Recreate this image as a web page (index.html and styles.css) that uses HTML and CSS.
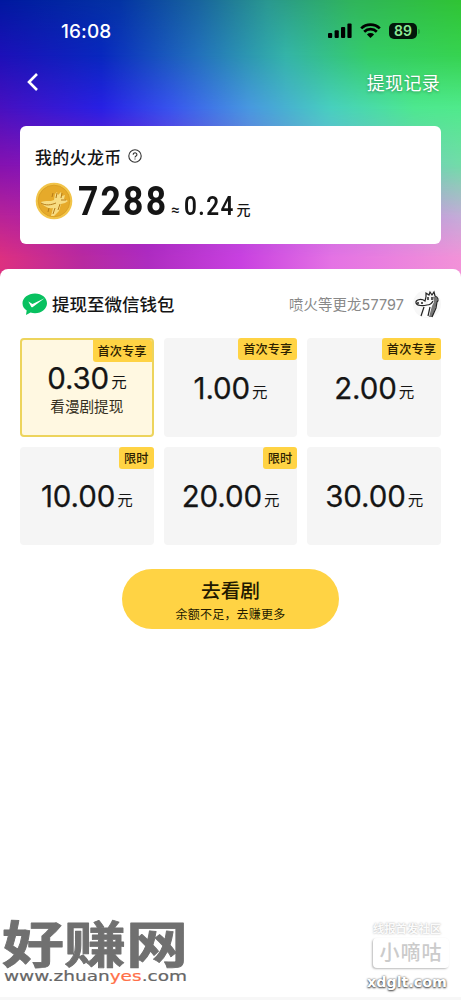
FILE: index.html
```html
<!DOCTYPE html>
<html lang="zh-CN">
<head>
<meta charset="utf-8">
<title>提现</title>
<link rel="stylesheet" href="styles.css">
</head>
<body>
<div class="screen">
  <div class="backdrop"><i class="band b1"></i><i class="band b2"></i><i class="band b3"></i><i class="band b4"></i><i class="band b5"></i><i class="band b6"></i></div>
  <header class="status">
    <span class="time">16:08</span>
    <span class="status-icons">
      <svg width="25" height="16" viewBox="0 0 25 16"><rect x="0" y="10" width="4.2" height="5" rx="1"/><rect x="6.6" y="7.3" width="4.2" height="7.7" rx="1"/><rect x="13" y="4" width="4.2" height="11" rx="1"/><rect x="19.4" y="0.4" width="4.2" height="14.6" rx="1"/></svg>
      <svg class="wifi" width="21" height="16" viewBox="0 0 21 16"><path d="M10.5 15 6.9 11.4a5.2 5.2 0 0 1 7.2 0z"/><path class="arc" d="M4.2 8.7a9 9 0 0 1 12.6 0M1.2 5.4a13.3 13.3 0 0 1 18.6 0"/></svg>
      <span class="battery">89</span><i class="battery-tip"></i>
    </span>
  </header>
  <nav class="nav">
    <svg class="back" width="12" height="20" viewBox="0 0 12 20"><path d="M10 2 2 10l8 8"/></svg>
    <span class="records">提现记录</span>
  </nav>
  <section class="balance">
    <div class="balance-title">我的火龙币
      <svg width="14" height="14" viewBox="0 0 14 14"><circle cx="7" cy="7" r="6.2"/><path d="M5.2 5.7c0-2.6 3.8-2.4 3.7 0C8.9 7 7 7 7 8.5M7 9.5v1.1"/></svg>
    </div>
    <div class="balance-row">
      <svg class="coin" width="38" height="38" viewBox="0 0 38 38">
        <circle cx="19" cy="19" r="18.3" fill="#f2c449"/><circle cx="19" cy="19" r="15.8" fill="#e6aa2a" stroke="#dba125"/>
        <path d="M6 20c5-2 9 0 13-2l1-6 2-2 1 3 3-3 1 4 3-1-1 4 4 2-3 2-4 1-2 7-5 5h-3l2-8c-4 1-8-1-12-5z" fill="#f7dc82"/>
        <path d="M6 21c5 3 10 2 15 0M18 11l-1 4M22 11l-1 5M27 11l-1 5M14 26l-1 4M20 26l-2 6M25 22l-2 6M26 18h5" fill="none" stroke="#b57b18" stroke-width="1"/>
      </svg>
      <span class="coins">7288</span><span class="approx">≈</span><span class="cash">0.24</span><span class="yuan">元</span>
    </div>
  </section>
  <main class="sheet">
    <div class="wallet">
      <svg class="wechat" width="26" height="23" viewBox="0 0 26 23"><path fill="#08c160" d="M13 .5C6.2.5.5 4.8.5 10.3c0 3 1.6 5.6 4.2 7.3L4 22l4.6-2.4c1.4.4 2.9.6 4.4.6 6.8 0 12-4.4 12-9.9S19.8.5 13 .5z"/><path fill="#fff" d="m6.3 8.6 4.2 2.5L22.5 5.2 10.8 14.1c-.7.4-1.3.2-1.6-.4z"/></svg>
      <h1>提现至微信钱包</h1>
      <span class="user">喷火等更龙57797</span>
      <svg class="avatar" width="28" height="28" viewBox="0 0 28 28"><circle cx="14" cy="14" r="14" fill="#f7f7f7"/><path d="M16 11h5l1 5-5 11h-7l2-9z" fill="#fff"/><path d="M20 7c3-1 5 1 4 4l-1 5-4 11h-3l3-11 2-4z" fill="#777"/><path d="M13 7V3l3 2 1-3 2 3 2-3 1 4c3 1 4 4 2 6l-1 6-4 9M13 7l-1 4c-4-3-10-1-9 2 1 3 7 3 11 2 3 0 5-2 6-4M11 17l-3 9M17 17l-2 9" fill="none" stroke="#222" stroke-width="1.2"/><path d="M15 7v3M19 7v3M5 12v2M9 12v2" stroke="#222" stroke-width="1.5"/></svg>
    </div>
    <div class="grid">
      <div class="option selected"><b class="tag">首次专享</b><div class="amount">0.30<small>元</small></div><div class="note">看漫剧提现</div></div>
      <div class="option"><b class="tag">首次专享</b><div class="amount">1.00<small>元</small></div></div>
      <div class="option"><b class="tag">首次专享</b><div class="amount">2.00<small>元</small></div></div>
      <div class="option"><b class="tag">限时</b><div class="amount">10.00<small>元</small></div></div>
      <div class="option"><b class="tag">限时</b><div class="amount">20.00<small>元</small></div></div>
      <div class="option"><div class="amount">30.00<small>元</small></div></div>
    </div>
    <button class="cta"><span class="cta-main">去看剧</span><span class="cta-sub">余额不足，去赚更多</span></button>
  </main>
  <svg class="mark-left" width="192" height="100" viewBox="0 0 192 100">
    <text class="mark-cn" x="2" y="73" textLength="186" lengthAdjust="spacingAndGlyphs">好赚网</text>
    <text class="mark-url" x="4" y="91" textLength="183" lengthAdjust="spacingAndGlyphs">www.zhuan<tspan class="hot">yes</tspan>.com</text>
  </svg>
  <div class="mark-right"><span class="mr-top">线报首发社区</span><span class="mr-box">小嘀咕</span><span class="mr-url">xdglt.com</span></div>
</div>
</body>
</html>
```
FILE: styles.css
```css
* { box-sizing: border-box; }
body { margin: 0; background: #fff; font-family: Inter, "Noto Sans CJK SC", sans-serif; color: #151515; }
.screen { position: relative; width: 461px; height: 1000px; overflow: hidden; display: flex; flex-direction: column; border-bottom: 3px solid #f7f7f7; }

/* Colour mesh: each band holds one row of colours and fades in over the previous row */
.backdrop { position: absolute; inset: 0 0 auto; height: 290px; z-index: -1; }
.band { position: absolute; inset: 0; }
.b1 { background: linear-gradient(90deg, #0018a0, #0434a4 26%, #18649e 43%, #2a9890 58%, #30b45c 76%, #30c434); }
.b2 { background: linear-gradient(90deg, #1c10b8, #0828be 22%, #2270bc 43%, #34b4a8 62%, #35cd67 80%, #36d350); -webkit-mask: linear-gradient(transparent 0, #000 55px); }
.b3 { background: linear-gradient(90deg, #4810c0, #2820e4 22%, #3854ee 37%, #4898e0 54%, #48d0be 72%, #4ee890 90%, #50ea8c); -webkit-mask: linear-gradient(transparent 55px, #000 108px); }
.b4 { background: linear-gradient(90deg, #8512b0, #8020d0 30%, #70b0e0 70%, #72dca8); -webkit-mask: linear-gradient(transparent 108px, #000 165px); }
.b5 { background: linear-gradient(90deg, #b82398, #a020c0 30%, #c060e0 65%, #c4acd8); -webkit-mask: linear-gradient(transparent 165px, #000 217px); }
.b6 { background: linear-gradient(90deg, #dd3080, #b82aa0 18%, #ae2cc0 32%, #c840e0 52%, #e472e4 72%, #f292d8); -webkit-mask: linear-gradient(transparent 217px, #000 258px); }

.status { height: 62px; padding: 0 41px 0 61px; display: flex; justify-content: space-between; align-items: center; }
.time { margin-top: 1px; color: #fff; font-size: 19px; font-weight: 500; letter-spacing: .1px; }
.status-icons { display: flex; align-items: center; }
.wifi { margin: 0 8px 0 7px; }
.wifi .arc { fill: none; stroke: #000; stroke-width: 2.7; }
.battery { width: 28px; height: 16px; border-radius: 5px; background: #03170b; color: #8bea96; font-size: 14px; font-weight: 600; line-height: 16px; text-align: center; }
.battery-tip { width: 2px; height: 5px; margin-left: 1px; border-radius: 0 2px 2px 0; background: #249b3c; }
.nav { height: 64px; padding: 0 21px 24px 27px; display: flex; justify-content: space-between; align-items: center; }
.back path { fill: none; stroke: #fff; stroke-width: 2.6; }
.records { margin-top: -1px; color: #fff; font-size: 18px; letter-spacing: .3px; text-shadow: 0 1px 3px #0005; }
.balance { flex: none; height: 118px; margin: 0 20px; padding: 16px 15px; border-radius: 6px; background: #fff; }
.balance-title { display: flex; align-items: center; gap: 6px; height: 28px; font-size: 17px; font-weight: 500; letter-spacing: .3px; }
.balance-title svg { fill: none; stroke: #333; stroke-width: 1.1; }
.balance-row { display: flex; align-items: baseline; height: 46px; margin-top: 2px; font-family: Roboto, "Noto Sans CJK SC", sans-serif; line-height: 60px; }
.coin { align-self: flex-start; margin: 10px 5px 0 0; }
.coins { width: 89px; font-size: 40px; font-weight: 700; letter-spacing: 2.4px; transform: scaleX(.89); transform-origin: left; }
.approx { margin-left: 4px; font-size: 15px; font-weight: 500; }
.cash { width: 50px; margin-left: 4px; font-size: 25px; font-weight: 600; letter-spacing: 1.6px; transform: scaleX(.9); transform-origin: left; }
.yuan { margin-left: 3px; font-size: 14px; font-weight: 500; }

.sheet { flex: 1; margin-top: 25px; padding: 20px 20px 0; border-radius: 8px 8px 0 0; background: #fff; }
.wallet { display: flex; align-items: center; height: 28px; }
.wechat { margin: 2px 4px 0 2px; }
.wallet h1 { margin: 0; font-size: 17.5px; font-weight: 500; }
.user { margin-left: auto; color: #888; font-size: 14.4px; letter-spacing: .1px; }
.avatar { margin: 1px 0 0 9px; }
.grid { display: grid; grid-template-columns: repeat(3, 1fr); grid-auto-rows: 98.5px; gap: 10px; margin-top: 21px; }
.option { position: relative; display: flex; flex-direction: column; align-items: center; justify-content: center; border-radius: 4px; background: #f5f5f5; }
.option.selected { border: 2px solid #edd45c; background: #fff8e1; }
.tag { position: absolute; top: 0; right: 0; height: 22px; padding: 0 5px; border-radius: 3px; background: #ffd344; color: #2d2100; font-size: 12.2px; font-weight: 500; line-height: 23px; letter-spacing: .1px; }
.selected .tag { border-radius: 0 2px 0 3px; }
.amount { display: flex; align-items: baseline; margin-top: 1px; font-size: 29.5px; line-height: 32px; letter-spacing: -.1px; -webkit-text-stroke: .25px #151515; }
.amount small { position: relative; top: -1px; margin-left: 2px; font-size: 15.5px; line-height: 20px; -webkit-text-stroke: 0; }
.selected .amount { margin-top: 5px; }
.note { margin-top: 2px; color: #332e20; font-size: 14.6px; line-height: 22px; }
.cta { display: flex; flex-direction: column; align-items: center; width: 217px; height: 60px; margin: 24px auto 0; padding: 9px 0 0; border: 0; border-radius: 30px; background: #ffd344; color: #221900; font-family: inherit; }
.cta-main { font-size: 19.7px; font-weight: 500; line-height: 27px; }
.cta-sub { font-size: 12px; line-height: 19px; letter-spacing: .2px; }

.mark-left { position: absolute; left: 0; top: 890px; }
.mark-cn { font: 700 50px "Noto Sans CJK SC", sans-serif; fill: #707070; stroke: #707070; stroke-width: .8px; stroke-linejoin: round; }
.mark-url { font: 14px "DejaVu Sans", sans-serif; fill: #666; stroke: #666; stroke-width: .2px; }
.mark-url .hot { fill: #ff7049; stroke: #ff7049; }
.mark-right { position: absolute; left: 361px; top: 920px; width: 92px; display: flex; flex-direction: column; align-items: center; color: #fff; }
.mr-top { font-size: 11.4px; font-weight: 700; line-height: 18px; color: #fbfbfb; text-shadow: 0 0 2px #aaa; }
.mr-box { width: 76px; height: 30px; margin-left: 8px; border-radius: 4px; background: #fff; color: #cbcbcb; font-size: 20px; font-weight: 500; line-height: 30px; text-align: center; letter-spacing: 1px; box-shadow: -1px 1px 2px #bbb; }
.mr-url { margin-top: 5px; color: #fff; font-family: "DejaVu Sans", sans-serif; font-size: 14.3px; font-weight: 700; line-height: 18px; text-shadow: 0 1px 2px #444, 0 0 2px #555; }
```
